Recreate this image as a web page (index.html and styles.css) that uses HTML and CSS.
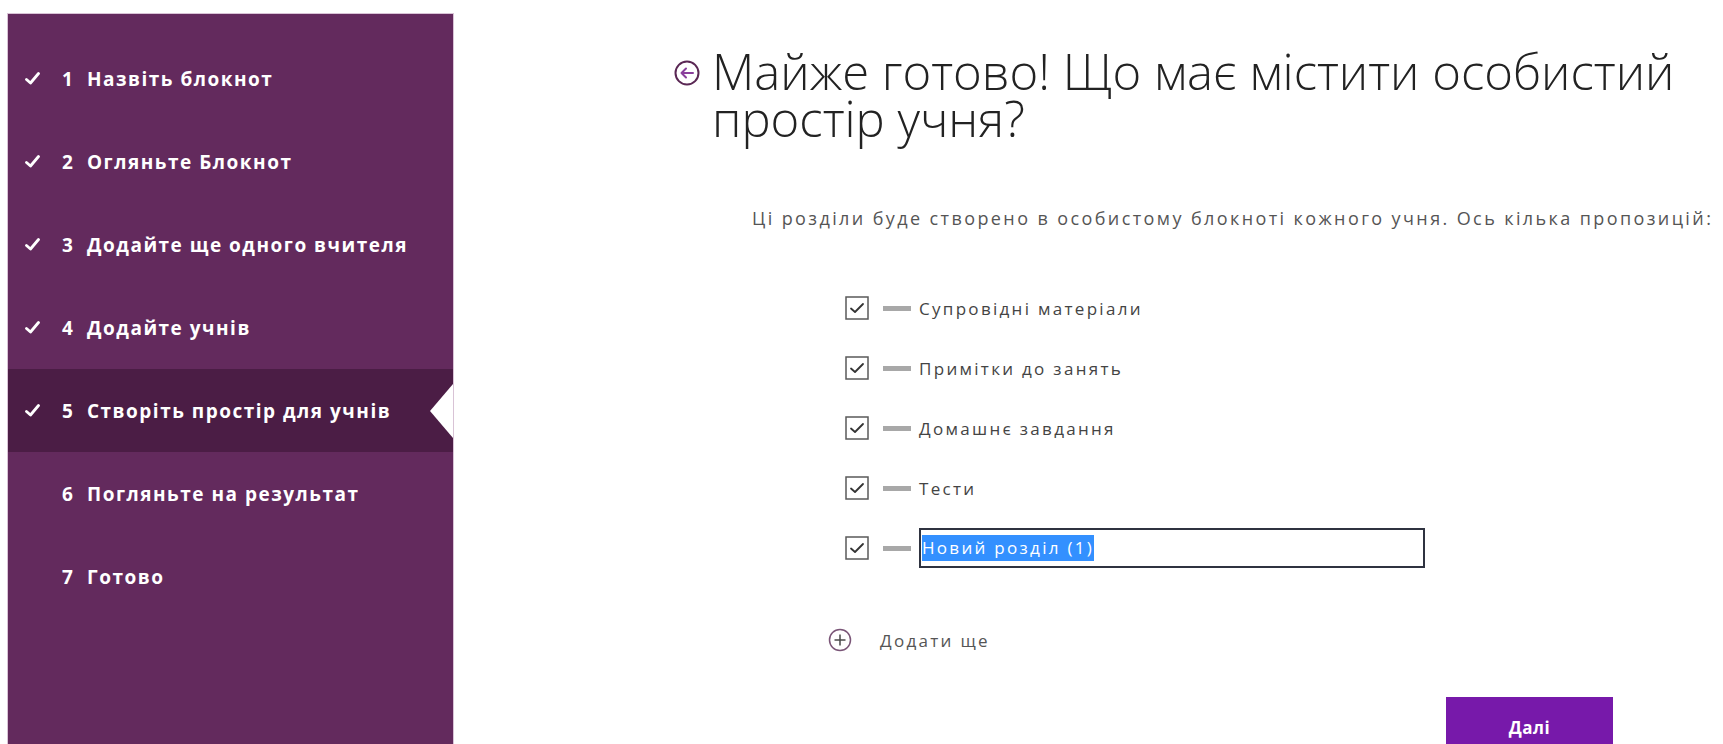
FILE: index.html
```html
<!DOCTYPE html>
<html lang="uk">
<head>
<meta charset="utf-8">
<title>Блокнот для занять</title>
<link rel="stylesheet" href="styles.css">
</head>
<body>
<div class="wizard">
  <nav class="steps">
    <ol class="step-list">
      <li class="step done">
        <span class="step-check"><svg viewBox="0 0 15 13"><path d="M1.5 7.5 L5.5 11 L13.5 1.5"/></svg></span>
        <span class="step-num">1</span><span class="step-label">Назвіть блокнот</span>
      </li>
      <li class="step done">
        <span class="step-check"><svg viewBox="0 0 15 13"><path d="M1.5 7.5 L5.5 11 L13.5 1.5"/></svg></span>
        <span class="step-num">2</span><span class="step-label">Огляньте Блокнот</span>
      </li>
      <li class="step done">
        <span class="step-check"><svg viewBox="0 0 15 13"><path d="M1.5 7.5 L5.5 11 L13.5 1.5"/></svg></span>
        <span class="step-num">3</span><span class="step-label">Додайте ще одного вчителя</span>
      </li>
      <li class="step done">
        <span class="step-check"><svg viewBox="0 0 15 13"><path d="M1.5 7.5 L5.5 11 L13.5 1.5"/></svg></span>
        <span class="step-num">4</span><span class="step-label">Додайте учнів</span>
      </li>
      <li class="step done current">
        <span class="step-check"><svg viewBox="0 0 15 13"><path d="M1.5 7.5 L5.5 11 L13.5 1.5"/></svg></span>
        <span class="step-num">5</span><span class="step-label">Створіть простір для учнів</span>
      </li>
      <li class="step">
        <span class="step-check"></span>
        <span class="step-num">6</span><span class="step-label">Погляньте на результат</span>
      </li>
      <li class="step">
        <span class="step-check"></span>
        <span class="step-num">7</span><span class="step-label">Готово</span>
      </li>
    </ol>
  </nav>

  <main class="panel">
    <header class="panel-head">
      <button class="back" type="button" aria-label="Назад">
        <svg viewBox="0 0 26 26">
          <circle cx="13" cy="13" r="11.5" class="back-ring"/>
          <path d="M19 13 H7.5 M12 8.5 L7.5 13 L12 17.5" class="back-arrow"/>
        </svg>
      </button>
      <h1 class="title">Майже готово! Що має містити особистий простір учня?</h1>
    </header>

    <p class="intro">Ці розділи буде створено в особистому блокноті кожного учня. Ось кілька пропозицій:</p>

    <ul class="sections">
      <li class="section">
        <span class="box"><svg viewBox="0 0 24 24"><rect x="1" y="1" width="22" height="22"/><path d="M6 12.5 L10 16 L18 8"/></svg></span>
        <span class="grip"></span>
        <span class="section-name">Супровідні матеріали</span>
      </li>
      <li class="section">
        <span class="box"><svg viewBox="0 0 24 24"><rect x="1" y="1" width="22" height="22"/><path d="M6 12.5 L10 16 L18 8"/></svg></span>
        <span class="grip"></span>
        <span class="section-name">Примітки до занять</span>
      </li>
      <li class="section">
        <span class="box"><svg viewBox="0 0 24 24"><rect x="1" y="1" width="22" height="22"/><path d="M6 12.5 L10 16 L18 8"/></svg></span>
        <span class="grip"></span>
        <span class="section-name">Домашнє завдання</span>
      </li>
      <li class="section">
        <span class="box"><svg viewBox="0 0 24 24"><rect x="1" y="1" width="22" height="22"/><path d="M6 12.5 L10 16 L18 8"/></svg></span>
        <span class="grip"></span>
        <span class="section-name">Тести</span>
      </li>
      <li class="section">
        <span class="box"><svg viewBox="0 0 24 24"><rect x="1" y="1" width="22" height="22"/><path d="M6 12.5 L10 16 L18 8"/></svg></span>
        <span class="grip"></span>
        <div class="name-field"><span class="name-selected">Новий розділ (1)</span></div>
      </li>
    </ul>

    <button class="add-more" type="button">
      <svg viewBox="0 0 24 24"><circle cx="12" cy="12" r="10.5" class="plus-ring"/><path d="M12 6.5 V17.5 M6.5 12 H17.5" class="plus-mark"/></svg>
      <span>Додати ще</span>
    </button>

    <div class="actions">
      <button class="next" type="button">Далі</button>
    </div>
  </main>
</div>
</body>
</html>
```

FILE: styles.css
```css
html, body {
  margin: 0;
  height: 100%;
  background: #ffffff;
}

body {
  font-family: "Open Sans", "Noto Sans", "Liberation Sans", sans-serif;
  overflow: hidden;
}

.wizard {
  display: flex;
  height: 744px;
}

/* ---- left step rail ---- */
.steps {
  flex: 0 0 445px;
  margin: 14px 0 0 8px;
  padding-top: 23px;
  background: #632a5d;
  box-shadow: 0 0 0 1px #d9c3d6;
}

.step-list {
  list-style: none;
  margin: 0;
  padding: 0;
}

.step {
  position: relative;
  display: flex;
  align-items: center;
  height: 83px;
  padding-left: 17px;
  color: #ffffff;
  font-size: 19px;
  font-weight: 700;
  letter-spacing: 1.5px;
}

.step.current {
  background: #4b1d45;
}

/* pointer notch of the active step */
.step.current::after {
  content: "";
  position: absolute;
  right: 0;
  top: 50%;
  margin-top: -27px;
  border-style: solid;
  border-width: 27px 23px 27px 0;
  border-color: transparent #ffffff transparent transparent;
}

.step-check {
  display: flex;
  align-items: center;
  width: 37px;
  flex: none;
}

.step-check svg {
  width: 15px;
  height: 13px;
  fill: none;
  stroke: #ffffff;
  stroke-width: 2.8;
  stroke-linecap: round;
  stroke-linejoin: round;
}

.step-num {
  width: 25px;
  flex: none;
}

/* ---- main panel ---- */
.panel {
  flex: 1;
  min-width: 0;
  padding: 48px 0 0 221px;
}

.panel-head {
  display: flex;
  align-items: flex-start;
  gap: 12px;
}

.back {
  flex: none;
  width: 26px;
  height: 26px;
  margin-top: 12px;
  padding: 0;
  border: 0;
  background: none;
}

.back svg {
  display: block;
  width: 26px;
  height: 26px;
  fill: none;
}

.back-ring {
  stroke: #5a2754;
  stroke-width: 2;
}

.back-arrow {
  stroke: #8a3f9c;
  stroke-width: 2;
  stroke-linecap: round;
  stroke-linejoin: round;
}

.title {
  margin: 0;
  max-width: 1000px;
  font-size: 49px;
  font-weight: 300;
  line-height: 47px;
  color: #222222;
}

.intro {
  margin: 64px 0 0 78px;
  font-size: 18px;
  line-height: 24px;
  letter-spacing: 2.4px;
  color: #555555;
  white-space: nowrap;
}

.sections {
  list-style: none;
  margin: 48px 0 0 171px;
  padding: 0;
}

.section {
  display: flex;
  align-items: center;
  height: 60px;
}

.box {
  flex: none;
  width: 24px;
  height: 24px;
}

.box svg {
  display: block;
  width: 24px;
  height: 24px;
  fill: none;
}

.box rect {
  stroke: #5a5a5a;
  stroke-width: 1.5;
}

.box path {
  stroke: #333333;
  stroke-width: 1.8;
  stroke-linecap: round;
  stroke-linejoin: round;
}

.grip {
  flex: none;
  width: 28px;
  height: 5px;
  margin: 0 8px 0 14px;
  background: #a8a8a8;
}

.section-name {
  font-size: 17px;
  letter-spacing: 2.3px;
  color: #444444;
}

.name-field {
  display: flex;
  align-items: center;
  box-sizing: border-box;
  width: 506px;
  height: 40px;
  padding-left: 1px;
  border: 2px solid #2f3340;
  font-size: 17px;
  letter-spacing: 2.3px;
}

.name-selected {
  background: #3390ff;
  color: #ffffff;
  line-height: 26px;
}

.add-more {
  display: flex;
  align-items: center;
  gap: 28px;
  height: 40px;
  margin: 42px 0 0 154px;
  padding: 0;
  border: 0;
  background: none;
  font-family: inherit;
  font-size: 17px;
  letter-spacing: 2.3px;
  color: #555555;
}

.add-more svg {
  width: 24px;
  height: 24px;
  fill: none;
}

.plus-ring {
  stroke: #7a5577;
  stroke-width: 1.5;
}

.plus-mark {
  stroke: #4a4a4a;
  stroke-width: 1.5;
}

.actions {
  display: flex;
  justify-content: flex-end;
  margin-top: 37px;
  padding-right: 110px;
}

.next {
  width: 167px;
  height: 60px;
  border: 0;
  background: #7719aa;
  color: #ffffff;
  font-family: inherit;
  font-size: 17px;
  font-weight: 700;
  letter-spacing: 0.5px;
}
```
